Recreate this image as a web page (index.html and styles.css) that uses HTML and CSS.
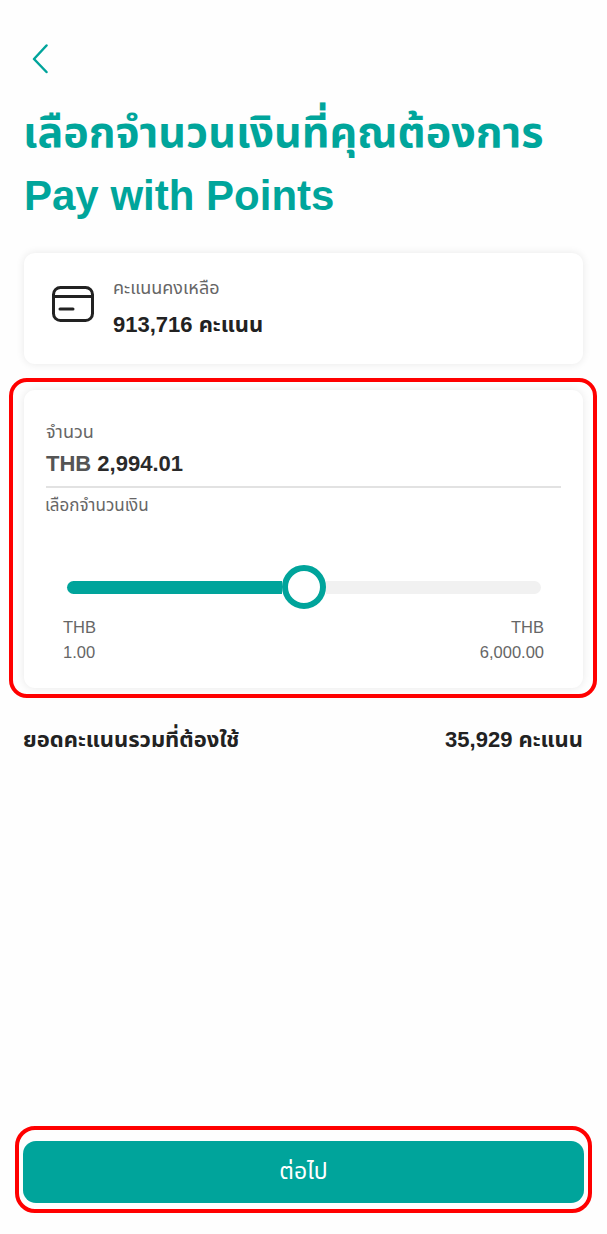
FILE: index.html
```html
<!DOCTYPE html>
<html lang="th">
<head>
<meta charset="utf-8">
<title>Pay with Points</title>
<link rel="stylesheet" href="styles.css">
</head>
<body>
<main class="page">
  <button class="back" aria-label="back">
    <svg class="back-icon" viewBox="0 0 16 30"><path d="M14.500 1.500 2 15l12.500 13"/></svg>
  </button>
  <h1 class="title"><span class="title-th">เลือกจำนวนเงินที่คุณต้องการ</span><span class="title-en">Pay with Points</span></h1>
  <section class="card balance">
    <svg class="card-icon" viewBox="0 0 42 36"><rect x="1.500" y="1.500" width="39" height="33" rx="7"/><path d="M2 10.500h38M8 23h13"/></svg>
    <div class="balance-text">
      <div class="label">คะแนนคงเหลือ</div>
      <div class="balance-value">913,716 คะแนน</div>
    </div>
  </section>
  <section class="card amount">
    <span class="mark mark-amount"></span>
    <div class="label">จำนวน</div>
    <div class="amount-value"><span class="currency">THB</span> 2,994.01</div>
    <div class="label pick">เลือกจำนวนเงิน</div>
    <div class="slider">
      <div class="fill"></div>
      <div class="thumb"></div>
      <div class="rest"></div>
    </div>
    <div class="limits">
      <div>THB<br>1.00</div>
      <div class="limit-max">THB<br>6,000.00</div>
    </div>
  </section>
  <div class="total">
    <span>ยอดคะแนนรวมที่ต้องใช้</span>
    <span>35,929 คะแนน</span>
  </div>
  <div class="cta">
    <span class="mark mark-cta"></span>
    <button class="next">ต่อไป</button>
  </div>
</main>
</body>
</html>
```
FILE: styles.css
```css
* { box-sizing: border-box; }
html, body { margin: 0; padding: 0; }
body {
  background: #fefefe;
  font-family: "Liberation Sans", "Noto Sans", "Noto Sans Thai", sans-serif;
  color: #222;
}
.page {
  width: 607px;
  height: 1234px;
  padding: 44px 24px 31px;
  display: flex;
  flex-direction: column;
}
.back {
  width: 24px;
  height: 30px;
  padding: 0 0 0 8px;
  border: 0;
  background: none;
  display: block;
}
.back-icon {
  display: block;
  width: 16px;
  height: 30px;
  fill: none;
  stroke: #00a49b;
  stroke-width: 2.500;
  stroke-linecap: round;
  stroke-linejoin: round;
}
.title {
  margin: 26px 0 0;
  font-weight: 700;
  color: #00a59b;
  white-space: nowrap;
}
.title-th, .title-en {
  display: block;
  line-height: 64px;
}
.title-th { font-size: 43px; margin-left: -1px; }
.title-en { font-size: 42px; }
.card {
  position: relative;
  background: #fff;
  border-radius: 11px;
  box-shadow: 0 0 9px rgba(0, 0, 0, 0.09);
}
.balance {
  margin-top: 25px;
  height: 111px;
  padding: 23px 28px;
  display: flex;
  gap: 19px;
}
.card-icon {
  width: 42px;
  height: 36px;
  margin-top: 10px;
  flex: none;
  fill: none;
  stroke: #222;
  stroke-width: 3;
  stroke-linecap: round;
}
.label {
  font-size: 18px;
  line-height: 24px;
  color: #666;
}
.balance-value {
  margin-top: 12px;
  font-size: 22px;
  line-height: 26px;
  font-weight: 700;
  color: #222;
}
.amount {
  margin-top: 26px;
  height: 298px;
  padding: 30px 22px 0;
}
.amount-value {
  margin-top: 7px;
  padding-bottom: 9px;
  border-bottom: 2px solid #e2e2e2;
  font-size: 22px;
  line-height: 26px;
  font-weight: 700;
  color: #2a2a2a;
}
.currency { color: #555; }
.pick {
  margin-top: 6px;
  margin-left: -1px;
  font-size: 17px;
}
.slider {
  margin: 47px 20px 0 21px;
  height: 44px;
  display: flex;
  align-items: center;
}
.fill {
  width: 215px;
  height: 13px;
  background: #00a49b;
  border-radius: 7px 0 0 7px;
}
.thumb {
  width: 44px;
  height: 44px;
  flex: none;
  border: 6px solid #00a49b;
  border-radius: 50%;
  background: #fff;
}
.rest {
  flex: 1;
  height: 13px;
  background: #f1f1f1;
  border-radius: 0 7px 7px 0;
}
.limits {
  margin: 6px 17px 0;
  display: flex;
  justify-content: space-between;
  font-size: 16.500px;
  line-height: 25px;
  color: #666;
}
.limit-max { text-align: right; }
.total {
  margin-top: 38px;
  margin-left: -1px;
  display: flex;
  justify-content: space-between;
  font-size: 22px;
  line-height: 28px;
  font-weight: 700;
  color: #222;
}
.cta {
  position: relative;
  margin-top: auto;
}
.next {
  display: block;
  width: 561px;
  height: 62px;
  margin-left: -1px;
  border: 0;
  border-radius: 13px;
  background: #00a49b;
  color: #fff;
  font: 23px "Liberation Sans", "Noto Sans", "Noto Sans Thai", sans-serif;
}
.mark {
  position: absolute;
  border: 4px solid #f00;
  pointer-events: none;
}
.mark-amount {
  inset: -12px -14px -10px -15px;
  border-radius: 18px;
}
.mark-cta {
  inset: -15px -9px -10px -9px;
  border-radius: 20px;
}
```
